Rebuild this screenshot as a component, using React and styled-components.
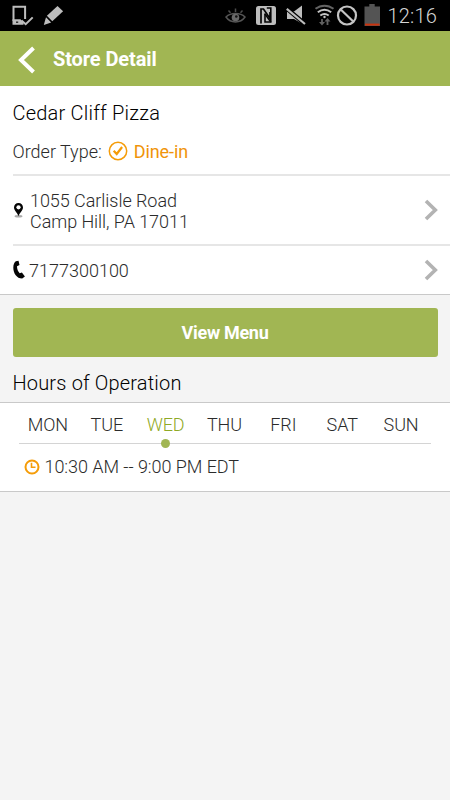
import React, { useState } from "react";
import styled, { createGlobalStyle } from "styled-components";

const days = ["MON", "TUE", "WED", "THU", "FRI", "SAT", "SUN"];

const StatusBar = () => (
  <Status>
    <svg width="66" height="31" viewBox="0 0 66 31" fill="none">
      <path d="M13.5 21V6.8h11.6V19" stroke="#bdbdbd" strokeWidth="2" />
      <path d="M12.5 19.2h8l3 3.2v2.4h-11z" fill="#bdbdbd" />
      <path d="M16 22.2h2.2" stroke="#222" strokeWidth="1.4" />
      <path d="M21.5 20.5l4.2 3.7 7-6.8" stroke="#bdbdbd" strokeWidth="2" />
      <path d="M57.5 6l5.6 5.2-10.8 10-5.4-5.4z" fill="#bdbdbd" />
      <path d="M46 17.3l5.2 5.1L43.8 25z" fill="#bdbdbd" />
    </svg>
    <svg width="166" height="31" viewBox="220 0 166 31" fill="none">
      {/* eye */}
      <path
        d="M226 17c4.5 6.5 14.5 6.5 19 0-2.5-2.5-5-3.5-9.5-3.5S228.5 14.500 226 17z"
        stroke="#555"
        strokeWidth="1.5"
      />
      <circle cx="235.5" cy="17.5" r="3.8" fill="#686868" />
      <circle cx="236.3" cy="16.5" r="1.3" fill="#111" />
      <path
        d="M235.5 8.5v3.5M228.5 10.5l2 2.2M242.5 10.5l-2 2.2"
        stroke="#4d4d4d"
        strokeWidth="1.5"
      />
      {/* nfc */}
      <rect x="256" y="6" width="20" height="19" rx="2.5" fill="#bdbdbd" />
      <path
        d="M261 23.500V9h2.500l6.500 9.500V12"
        stroke="#050505"
        strokeWidth="1.700"
      />
      <path d="M265 13.500V22h5.800V8h-4" stroke="#050505" strokeWidth="1.600" />
      <path d="M265 14l5.800 8" stroke="#050505" strokeWidth="1.500" />
      {/* muted speaker */}
      <path d="M287 11.5h7l8-6V21.5l-2 1-6-3.500h-7z" fill="#bdbdbd" />
      <path d="M286 7.8L305 24" stroke="#000" strokeWidth="4.4" />
      <path d="M286.8 8.8L305 24" stroke="#bdbdbd" strokeWidth="2.2" />
      {/* wifi */}
      <path d="M315.5 8.8c5.5-4.2 12.5-4.2 18 0" stroke="#646464" strokeWidth="2" />
      <path
        d="M317.8 12.3c4.3-3.2 9.1-3.2 13.4 0M320.3 15.5c2.7-1.9 5.7-1.9 8.4 0"
        stroke="#c4c4c4"
        strokeWidth="2"
      />
      <circle cx="324.5" cy="17" r="1.2" fill="#c4c4c4" />
      <path d="M322 19v5M327.5 20v5" stroke="#606060" strokeWidth="1.8" />
      <path d="M319 22l3 3.5 3-3.5zM324.5 21.5l3-3.5 3 3.5z" fill="#606060" />
      {/* blocked */}
      <circle cx="347" cy="15.5" r="9" stroke="#c4c4c4" strokeWidth="2.2" />
      <path d="M340.5 9.2l13 12.6" stroke="#c4c4c4" strokeWidth="2.2" />
      {/* battery */}
      <path d="M364.5 6.5h4.8V4h5.4v2.5h5.3V26h-15.5z" fill="#545454" />
      <rect x="365" y="23.6" width="14.5" height="2" fill="#c9330e" />
    </svg>
    <Clock>12:16</Clock>
  </Status>
);

const Arrow = () => (
  <svg width="15" height="22" viewBox="0 0 15 22" fill="none">
    <path d="M2 2l9.3 9L2 20" stroke="#b3b3b3" strokeWidth="3.6" />
  </svg>
);

const App = () => {
  const [selectedDay, setSelectedDay] = useState("WED");

  return (
    <Screen>
      <GlobalStyle />
      <StatusBar />
      <Header>
        <BackButton aria-label="Back">
          <svg width="18" height="28" viewBox="0 0 18 28" fill="none">
            <path d="M15.5 2L3 14l12.5 12" stroke="#fff" strokeWidth="4" />
          </svg>
        </BackButton>
        <h1>Store Detail</h1>
      </Header>

      <StoreCard>
        <StoreName>Cedar Cliff Pizza</StoreName>
        <OrderType>
          <span>Order Type:</span>
          <svg width="20" height="20" viewBox="0 0 20 20" fill="none">
            <circle cx="10" cy="10" r="8.7" stroke="#f59c08" strokeWidth="1.5" />
            <path d="M5.7 9.8l3 3.2 5.4-7" stroke="#f59c08" strokeWidth="2.2" />
          </svg>
          <strong>Dine-in</strong>
        </OrderType>
        <AddressRow>
          <svg width="11" height="17" viewBox="0 0 11 17">
            <ellipse cx="5.5" cy="14.3" rx="4" ry="1.3" fill="#aaa" />
            <path
              d="M5.5 1C2.9 1 1 2.9 1 5.4 1 8.2 4 10.3 5.5 14 7 10.3 10 8.2 10 5.4 10 2.9 8.1 1 5.5 1z"
              fill="#050505"
            />
            <circle cx="5.5" cy="5.3" r="2.1" fill="#fff" />
          </svg>
          <p>
            1055 Carlisle Road
            <br />
            Camp Hill, PA 17011
          </p>
          <Arrow />
        </AddressRow>
        <PhoneRow>
          <svg width="12" height="20" viewBox="0 0 12 20">
            <path
              d="M2.8 1.3l2.7-.6 1 4.2-2.5 1.3c0 2.8 1 5.2 2.7 7l2.2-.8 3 4-2.7 2.2C4 18.7.3 13.5.3 7.8c0-3.2 1-5.6 2.5-6.5z"
              fill="#050505"
            />
          </svg>
          <p>7177300100</p>
          <Arrow />
        </PhoneRow>
      </StoreCard>

      <MenuButton>View Menu</MenuButton>

      <SectionTitle>Hours of Operation</SectionTitle>
      <HoursCard>
        <DayTabs>
          {days.map((day) => (
            <Day
              key={day}
              $active={day === selectedDay}
              onClick={() => setSelectedDay(day)}
            >
              {day}
            </Day>
          ))}
        </DayTabs>
        <Hours>
          <svg width="16" height="16" viewBox="0 0 16 16" fill="none">
            <circle cx="8" cy="8" r="6.5" stroke="#f59c08" strokeWidth="2" />
            <path d="M7.5 3.8v4.5h4" stroke="#f59c08" strokeWidth="1.6" />
          </svg>
          <p>10:30 AM -- 9:00 PM EDT</p>
        </Hours>
      </HoursCard>
    </Screen>
  );
};

export default App;

const GlobalStyle = createGlobalStyle`
  * {
    box-sizing: border-box;
  }
  body {
    margin: 0;
    background: #f4f4f4;
  }
  h1, h2, p {
    margin: 0;
  }
  button {
    font-family: inherit;
    border: none;
    padding: 0;
    cursor: pointer;
  }
  svg {
    display: block;
    flex-shrink: 0;
  }
`;

const Screen = styled.div`
  display: flex;
  flex-direction: column;
  min-height: 800px;
  font-family: Roboto, "Liberation Sans", sans-serif;
  font-size: 18px;
  line-height: 24px;
  font-weight: 300;
  color: #2b2b2b;
  background: #f4f4f4;
`;

const Status = styled.div`
  display: flex;
  align-items: center;
  height: 31px;
  background: #000;

  svg + svg {
    margin-left: auto;
  }
`;

const Clock = styled.span`
  width: 64px;
  padding-left: 1.5px;
  font-size: 20px;
  letter-spacing: 0.2px;
  color: #d6d6d6;
`;

const Header = styled.header`
  display: flex;
  align-items: center;
  height: 55px;
  padding: 2px 0 0 18px;
  background: #a1b653;
  color: #fff;

  h1 {
    margin-left: 17px;
    padding-bottom: 1px;
    font-size: 20px;
    font-weight: 700;
    letter-spacing: -0.1px;
  }
`;

const BackButton = styled.button`
  background: none;
`;

const StoreCard = styled.section`
  height: 209px;
  padding: 14px 0 0 12.5px;
  background: #fff;
  border-bottom: 1px solid #c9c9c9;
`;

const StoreName = styled.h2`
  font-size: 20px;
  line-height: 26px;
  font-weight: 300;
  letter-spacing: 0.22px;
  color: #000;
`;

const OrderType = styled.div`
  display: flex;
  align-items: center;
  height: 24px;
  margin: 14px 0 10px;

  svg {
    margin: -3px 6px 0;
  }
  strong {
    font-weight: 400;
    letter-spacing: -0.1px;
    color: #f0940a;
  }
`;

const Row = styled.div`
  display: flex;
  align-items: center;
  padding-right: 11px;
  border-top: 2px solid #e6e6e6;

  p {
    flex: 1;
  }
`;

const AddressRow = styled(Row)`
  height: 70px;

  p {
    padding: 2px 0 0 6.5px;
    line-height: 21px;
    letter-spacing: -0.05px;
  }
`;

const PhoneRow = styled(Row)`
  height: 50px;

  p {
    padding: 2px 0 0 4.5px;
  }
`;

const MenuButton = styled.button`
  height: 49px;
  margin: 12.5px 12.5px 0;
  border-radius: 3px;
  background: #a1b653;
  color: #fff;
  font-size: 18px;
  font-weight: 700;
  letter-spacing: -0.3px;
`;

const SectionTitle = styled.h2`
  margin: 13.5px 12.5px 6px;
  font-size: 20px;
  line-height: 26px;
  font-weight: 300;
  letter-spacing: 0.17px;
  color: #000;
`;

const HoursCard = styled.section`
  height: 90px;
  padding: 0 19.5px 0 18.5px;
  background: #fff;
  border: solid #c9c9c9;
  border-width: 1px 0;
`;

const DayTabs = styled.div`
  display: grid;
  grid-template-columns: repeat(7, 1fr);
  height: 41px;
  border-bottom: 1px solid #d4d4d4;
`;

const Day = styled.button`
  position: relative;
  padding-top: 3px;
  background: none;
  font-size: 18px;
  font-weight: 300;
  letter-spacing: -0.1px;
  color: ${({ $active }) => ($active ? "#8fa926" : "#2b2b2b")};

  &::after {
    content: "";
    display: ${({ $active }) => ($active ? "block" : "none")};
    position: absolute;
    left: calc(50% - 4.5px);
    bottom: -5px;
    width: 9px;
    height: 9px;
    border-radius: 50%;
    background: #a1b653;
  }
`;

const Hours = styled.div`
  display: flex;
  align-items: center;
  height: 46px;
  padding-left: 5.5px;

  p {
    padding-left: 4.5px;
    letter-spacing: -0.05px;
  }
`;
